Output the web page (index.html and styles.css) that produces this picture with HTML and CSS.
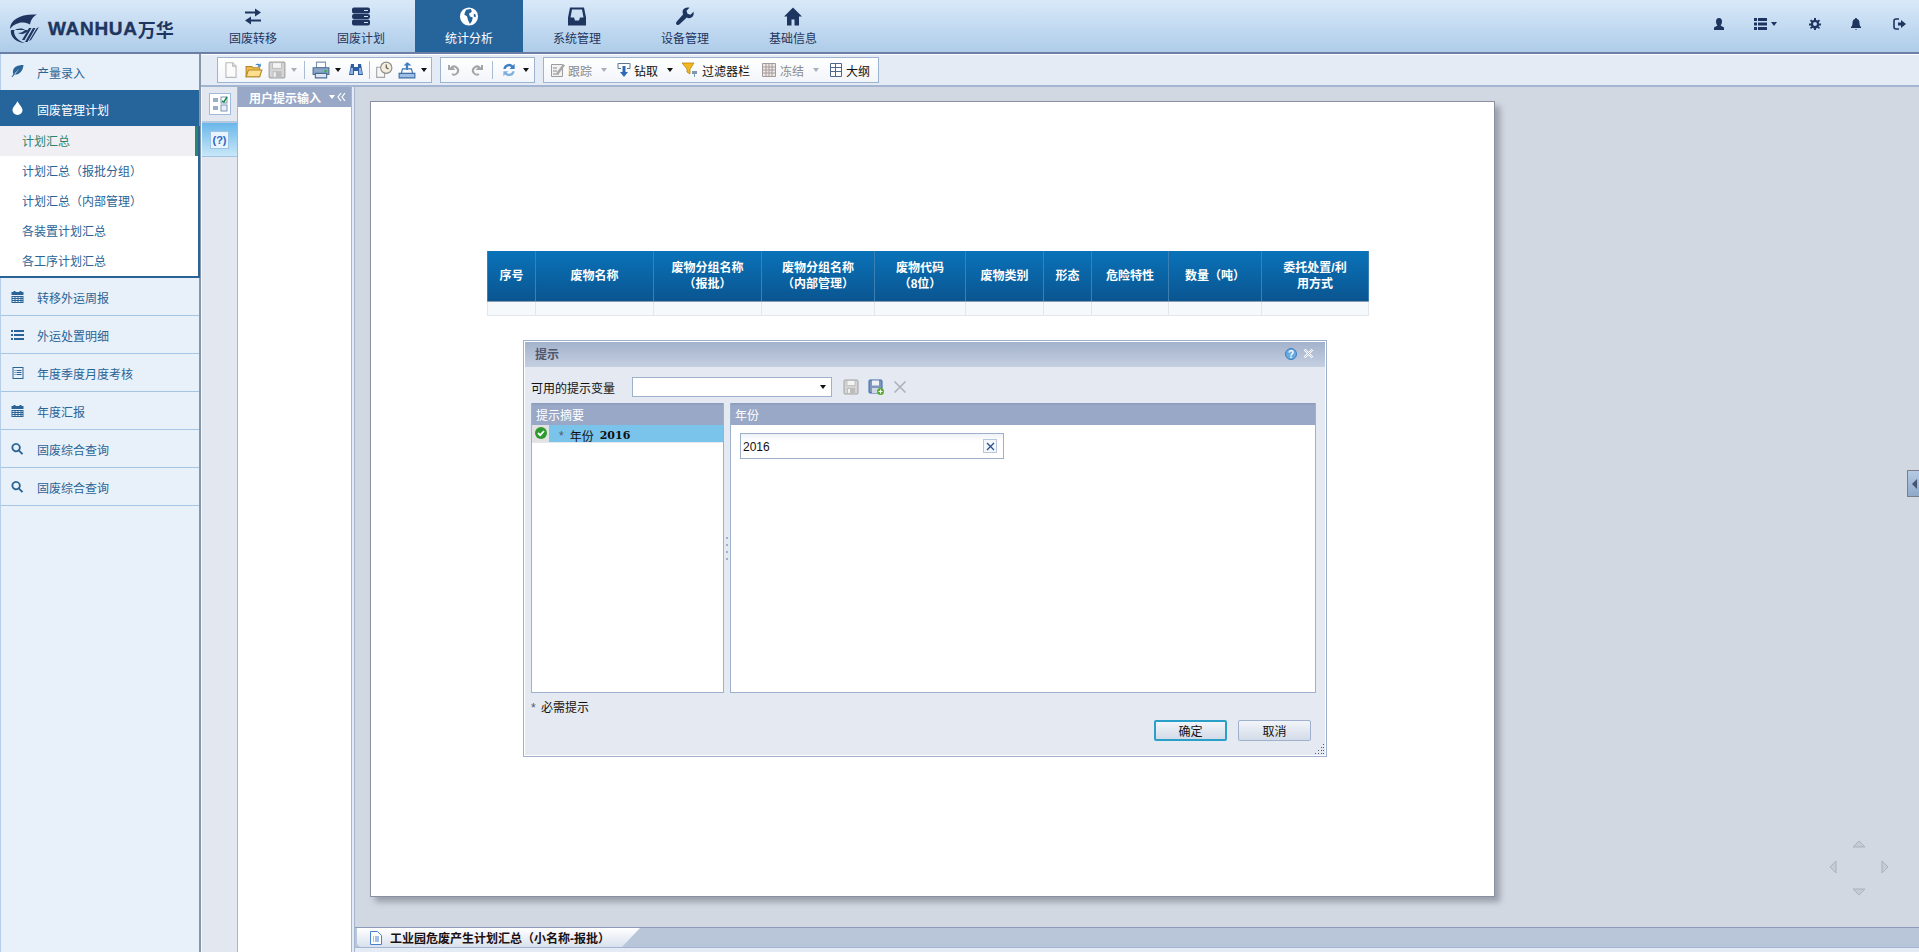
FILE: index.html
```html
<!DOCTYPE html>
<html>
<head>
  <meta charset="UTF-8">
  <title>固废管理计划</title>
  <link rel="stylesheet" href="styles.css">
</head>
<body>
  <svg class="defs" width="0" height="0">
    <symbol id="cal" viewBox="0 0 12 12"><path d="M2 0h2v1h4V0h2v1h2v3H0V1h2zM0 5h12v7H0zm1 1v1h2V6zm3 0v1h2V6zm3 0v1h2V6zm3 0v1h1V6zM1 8v1h2V8zm3 0v1h2V8zm3 0v1h2V8zm3 0v1h1V8zM1 10v1h2v-1zm3 0v1h2v-1zm3 0v1h2v-1zm3 0v1h1v-1z" fill-rule="evenodd"/></symbol>
    <symbol id="find" viewBox="0 0 13 13"><path d="M5 0a5 5 0 0 1 4.100 7.800l3.600 3.500-1.500 1.500-3.500-3.600A5 5 0 1 1 5 0zm0 2a3 3 0 1 0 0 6 3 3 0 0 0 0-6z" fill-rule="evenodd"/></symbol>
    <symbol id="disk" viewBox="0 0 16 16"><rect x="1" y="1" width="14" height="14" rx="1" fill="#d4d4d4" stroke="#a3a3a3"/><rect x="4" y="1.500" width="8" height="5" fill="#f4f4f4" stroke="#b5b5b5" stroke-width=".7"/><rect x="4" y="9" width="8" height="6" fill="#bdbdbd"/><rect x="5" y="10" width="2" height="4" fill="#f0f0f0"/></symbol>
  </svg>

  <header class="topbar">
    <div class="logo">
      <svg width="29" height="29" viewBox="0 0 29 29"><path d="M0 15C0 6 10-.5 27 .5c-4 2-6 5-7 10-4-2-8-2.500-11-1.500C5 10 2 12 0 15z" fill="#1e3560"/><path d="M1 16c-1.500 7 6 13 14 13-6-2-11-6-11-12 3-3 8-3 11-1-2 2-4 3-7 3 3 2 8 1 10-3z" fill="#1e3560"/><path d="M15 28l8-14h2.500l-8 14zM19 27l7.500-12.500L29 13l-8 13zM12 26l7-12h2.500l-7 12z" fill="#1e3560"/></svg>
      <span class="logo-en">WANHUA</span><span class="logo-cn">万华</span>
    </div>
    <nav class="mainnav">
      <a class="navitem">
        <svg width="18" height="16" viewBox="0 0 18 16"><path d="M1 3h10V0l6 4-6 4V5H1zM17 11H7V8l-6 4 6 4v-3h10z"/></svg>
        <span>固废转移</span>
      </a>
      <a class="navitem">
        <svg width="18" height="18" viewBox="0 0 18 18"><path d="M2 0h14a2 2 0 0 1 2 2v2a2 2 0 0 1-2 2H2a2 2 0 0 1-2-2V2a2 2 0 0 1 2-2zm0 6.500h14a2 2 0 0 1 2 2v1a2 2 0 0 1-2 2H2a2 2 0 0 1-2-2v-1a2 2 0 0 1 2-2zM2 12h14a2 2 0 0 1 2 2v2a2 2 0 0 1-2 2H2a2 2 0 0 1-2-2v-2a2 2 0 0 1 2-2z"/><path d="M12 2.500h4v1h-4zM12 8.500h4v1h-4zM12 14.500h4v1h-4z" fill="#cfe1f3"/></svg>
        <span>固废计划</span>
      </a>
      <a class="navitem active">
        <svg width="20" height="20" viewBox="0 0 20 20"><circle cx="10" cy="10" r="9.500" fill="#fff"/><path d="M7 3l5-1 1 3-3 2 1 3 3 1-1 4-2 3-2-4-1-4-3-2 1-3zM15 7l2 1v3l-2-1z" fill="#26659c"/></svg>
        <span>统计分析</span>
      </a>
      <a class="navitem">
        <svg width="18" height="18" viewBox="0 0 18 18"><path d="M2 0h14l2 10v8H0v-8zM4 2l-1.500 8H6l1 3h4l1-3h3.500L14 2z" fill-rule="evenodd"/></svg>
        <span>系统管理</span>
      </a>
      <a class="navitem">
        <svg width="18" height="18" viewBox="0 0 18 18"><path d="M17.500 4.200l-3 3-3-1-1-3 3-3C11-.6 8 .3 7 2.500c-.7 1.500-.5 3 .2 4.200L.8 14c-1 1.200-1 2.200-.2 3s2 .7 3-.3l7.200-6.600c1.300.7 2.800.8 4.200.1 2.200-1 3.200-3.600 2.500-6z"/></svg>
        <span>设备管理</span>
      </a>
      <a class="navitem">
        <svg width="18" height="18" viewBox="0 0 18 18"><path d="M9 0l9 9h-3v9h-4.500v-6h-3v6H3V9H0z"/></svg>
        <span>基础信息</span>
      </a>
    </nav>
    <div class="usertools">
      <svg class="tool-user" width="12" height="12" viewBox="0 0 12 12"><path d="M6 0c2 0 3 1.500 3 3.500S8 7 7.500 7.500L11 9.500V12H1V9.500l3.500-2C4 7 3 5.500 3 3.500S4 0 6 0z"/></svg>
      <span class="tool-list">
        <svg width="13" height="12" viewBox="0 0 13 12"><path d="M0 0h3v3H0zM4 0h9v3H4zM0 4.500h3v3H0zM4 4.500h9v3H4zM0 9h3v3H0zM4 9h9v3H4z"/></svg>
        <i class="caret"></i>
      </span>
      <svg class="tool-cog" width="12" height="12" viewBox="0 0 12 12"><path d="M5 0h2v2l1.500.6L10 1.500 11 3 9.700 4.200 10 5.500h2v2h-2l-.4 1L11 9.500 10 11 8.500 9.800 7 10.400V12H5v-1.600L3.500 9.800 2 11 1 9.500l1.400-1-.4-1H0v-2h2l.3-1.300L1 3l1-1.500 1.500 1.100L5 2zm1 4a2 2 0 1 0 0 4 2 2 0 0 0 0-4z" fill-rule="evenodd"/></svg>
      <svg class="tool-bell" width="12" height="12" viewBox="0 0 12 12"><path d="M6 0c.7 0 1 .4 1 1 1.800.5 2.500 2 2.500 4 0 2 .5 3 1.500 4v1H1V9c1-1 1.500-2 1.500-4 0-2 .7-3.500 2.500-4 0-.6.3-1 1-1zM5 11h2l-1 1z"/></svg>
      <svg width="13" height="12" viewBox="0 0 13 12"><path d="M6 1H3a2 2 0 0 0-2 2v6a2 2 0 0 0 2 2h3" fill="none" stroke="#1e3560" stroke-width="1.600"/><path d="M5 4.500h3V2l5 4-5 4V7.500H5z"/></svg>
    </div>
  </header>

  <div class="app">
    <aside class="sidebar">
      <a class="side-item first">
        <svg width="12" height="12" viewBox="0 0 12 12"><path d="M12 0C6 0 2 2 1.500 6c-.2 1.500 0 2.500.4 3L0 12l1 0 2-2.500c4 .5 8-2 9-9.500zM3 8.500L8 3.500 3.700 9z" fill-rule="evenodd"/></svg>
        <span>产量录入</span>
      </a>
      <a class="side-item open">
        <svg width="12" height="14" viewBox="0 0 12 14"><path d="M6 0c1 3 5 6 5 9a5 5 0 0 1-10 0c0-3 4-6 5-9z" fill="#fff"/></svg>
        <span>固废管理计划</span>
      </a>
      <div class="submenu">
        <a class="sub-item current">计划汇总</a>
        <a class="sub-item">计划汇总（报批分组）</a>
        <a class="sub-item">计划汇总（内部管理）</a>
        <a class="sub-item">各装置计划汇总</a>
        <a class="sub-item">各工序计划汇总</a>
      </div>
      <a class="side-item"><svg width="12" height="12"><use href="#cal"/></svg><span>转移外运周报</span></a>
      <a class="side-item">
        <svg width="13" height="12" viewBox="0 0 13 12"><path d="M0 1h2v2H0zM3 1h10v2H3zM0 5h2v2H0zM3 5h10v2H3zM0 9h2v2H0zM3 9h10v2H3z"/></svg>
        <span>外运处置明细</span>
      </a>
      <a class="side-item">
        <svg width="12" height="12" viewBox="0 0 12 12"><path d="M1 0h11v12H1zm1 1v10h9V1zm1 2h1v1H3zm2 0h5v1H5zM3 5h1v1H3zm2 0h5v1H5zM3 7h1v1H3zm2 0h5v1H5z" fill-rule="evenodd"/></svg>
        <span>年度季度月度考核</span>
      </a>
      <a class="side-item"><svg width="12" height="12"><use href="#cal"/></svg><span>年度汇报</span></a>
      <a class="side-item"><svg width="12" height="12"><use href="#find"/></svg><span>固废综合查询</span></a>
      <a class="side-item"><svg width="12" height="12"><use href="#find"/></svg><span>固废综合查询</span></a>
    </aside>

    <main class="workspace">
      <div class="toolbar">
        <div class="tb-group first">
          <span class="btn"><svg width="18" height="18" viewBox="0 0 16 16"><path d="M3.500 1.500h6l3 3v10h-9z" fill="#fbfbfb" stroke="#b9b9b9"/><path d="M9.500 1.500v3h3" fill="#e8e8e8" stroke="#b9b9b9"/></svg></span>
          <span class="btn"><svg width="18" height="18" viewBox="0 0 16 16"><path d="M1 5h5l1 1h6v8H1z" fill="#f3c04f" stroke="#b78a25"/><path d="M1 14l2-6h12l-2 6z" fill="#fbdf8e" stroke="#b78a25"/><path d="M9 4c1-2 3-2 4-1l1-1v3h-3l1-1c-1-.5-2-.5-3 0z" fill="#3f7fc4"/></svg></span>
          <span class="btn"><svg width="18" height="18"><use href="#disk"/></svg></span>
          <span class="caret-btn"><i class="caret pale"></i></span>
          <i class="sep"></i>
          <span class="btn"><svg width="18" height="18" viewBox="0 0 16 16"><path d="M4 1h8v5H4z" fill="#fff" stroke="#7d93ad"/><path d="M1 6h14v6H1z" fill="#8aa7c9" stroke="#4c6d93"/><path d="M3 11h10v4H3z" fill="#dbe6f2" stroke="#4c6d93"/><rect x="11" y="8" width="2" height="2" fill="#38b24a"/></svg></span>
          <span class="caret-btn"><i class="caret dark"></i></span>
          <span class="btn"><svg width="16" height="16" viewBox="0 0 16 16"><path d="M3 2h3v3h4V2h3l2 11h-5V9H6v4H1z" fill="#2f5f9f"/><path d="M3 6h2v6H2zM11 6h2l1 6h-3z" fill="#8db5df"/></svg></span>
          <i class="sep tight"></i>
          <span class="btn"><svg width="18" height="18" viewBox="0 0 16 16"><path d="M1.500 5.500h7v9h-7z" fill="#f7f7f7" stroke="#a5a5a5"/><circle cx="10" cy="6" r="5" fill="#f3eddc" stroke="#8c8c8c"/><path d="M10 3v3l2 1" fill="none" stroke="#555"/></svg></span>
          <span class="btn"><svg width="18" height="18" viewBox="0 0 16 16"><path d="M1 11h14v4H1z" fill="#9dbfe4" stroke="#3f6ea8"/><path d="M3 11l1-4h3M13 11l-1-4H9" fill="none" stroke="#3f6ea8"/><path d="M7 8V4H5l3-3 1 .5 3 2.500H9v4z" fill="#3f7fc4"/></svg></span>
          <span class="caret-btn"><i class="caret dark"></i></span>
        </div>
        <div class="tb-group">
          <span class="btn"><svg width="16" height="16" viewBox="0 0 16 16"><path d="M3 3v4h4L5.500 5.500A4 4 0 1 1 6 12" fill="none" stroke="#a5a5a5" stroke-width="2"/></svg></span>
          <span class="btn"><svg width="16" height="16" viewBox="0 0 16 16"><path d="M13 3v4H9l1.500-1.500A4 4 0 1 0 10 12" fill="none" stroke="#a5a5a5" stroke-width="2"/></svg></span>
          <i class="sep"></i>
          <span class="btn"><svg width="18" height="18" viewBox="0 0 16 16"><path d="M3 7a5 5 0 0 1 8.500-3L13 2.500V7H8.500l1.500-1.500A3 3 0 0 0 5 7z" fill="#3f7fc4"/><path d="M13 9a5 5 0 0 1-8.500 3L3 13.500V9h4.500L6 10.500A3 3 0 0 0 11 9z" fill="#7fb0e0"/></svg></span>
          <span class="caret-btn"><i class="caret dark"></i></span>
        </div>
        <div class="tb-group text-group">
          <span class="tb-item off"><svg width="16" height="16" viewBox="0 0 16 16"><path d="M1.500 2.500h11v12h-11z" fill="#f2f2f2" stroke="#9c9c9c"/><path d="M3 6h4M3 9h4M3 12h6" stroke="#8a8a8a"/><path d="M7 10l6-8 2 1.500-6 8-3 1z" fill="#a8a8a8"/></svg>跟踪</span>
          <span class="caret-btn"><i class="caret pale"></i></span>
          <span class="tb-item"><svg width="16" height="16" viewBox="0 0 16 16"><path d="M2 1.500h12M2 1.500v5h3M14 1.500v5h-3" fill="none" stroke="#5a7896"/><path d="M6.500 4h3v6H12l-4 5-4-5h2.500z" fill="#2f6bb5"/></svg>钻取</span>
          <span class="caret-btn"><i class="caret dark"></i></span>
          <span class="tb-item wide"><svg width="16" height="16" viewBox="0 0 16 16"><path d="M0 1h12L8 7v5l-3-2V7z" fill="#f2b821" stroke="#b98613" stroke-width=".8"/><path d="M10 9h5v3h-2v3h-1v-3h-2z" fill="#7d97b6"/></svg>过滤器栏</span>
          <span class="tb-item off gap3"><svg width="16" height="16" viewBox="0 0 16 16"><path d="M1.500 1.500h13v13h-13z" fill="#efe9e6" stroke="#a59a9a"/><path d="M1.500 5h13M1.500 8h13M1.500 11h13M5 1.500v13M8 1.500v13M11 1.500v13" stroke="#a59a9a" fill="none"/></svg>冻结</span>
          <span class="caret-btn"><i class="caret pale"></i></span>
          <span class="tb-item"><svg width="16" height="16" viewBox="0 0 16 16"><path d="M2.500 1.500h11v13h-11z" fill="#fff" stroke="#4d6a8c"/><path d="M7.500 1.500v13M2.500 5.500h5M2.500 9.500h5M7.500 5.500h6M7.500 9.500h6" stroke="#4d6a8c" fill="none"/></svg>大纲</span>
        </div>
      </div>

      <div class="content">
        <div class="tabstrip">
          <span class="tile">
            <svg width="18" height="18" viewBox="0 0 18 18"><path d="M2 4h5M2 6h5M2 12h5M2 14h5" stroke="#2f5f8f" fill="none"/><rect x="10" y="2" width="6" height="6" fill="#fff" stroke="#7f96b3"/><path d="M11 6l2 1 3-5" fill="none" stroke="#1c8a4c" stroke-width="1.500"/><rect x="10" y="10" width="6" height="6" fill="#e8eef6" stroke="#7f96b3"/></svg>
          </span>
          <span class="tab-rule"></span>
          <span class="tabbtn"><span class="help">(?)</span></span>
        </div>
        <section class="panel">
          <div class="panel-head">
            <span>用户提示输入</span>
            <span class="panel-ctl"><i class="caret white"></i><svg width="9" height="8" viewBox="0 0 9 8"><path d="M4 0L1 4l3 4M8 0L5 4l3 4" fill="none" stroke="#fff" stroke-width="1.200"/></svg></span>
          </div>
        </section>
        <div class="gutter"></div>
        <div class="viewer">
          <div class="canvas">
            <div class="sheet">
              <table class="report">
                <colgroup>
                  <col class="w48"><col class="w118"><col class="w108"><col class="w113"><col class="w91">
                  <col class="w78"><col class="w48"><col class="w77"><col class="w93"><col class="w107">
                </colgroup>
                <thead>
                  <tr>
                    <th>序号</th><th>废物名称</th><th>废物分组名称<br>（报批）</th><th>废物分组名称<br>（内部管理）</th><th>废物代码<br>（8位）</th>
                    <th>废物类别</th><th>形态</th><th>危险特性</th><th>数量（吨）</th><th>委托处置/利<br>用方式</th>
                  </tr>
                </thead>
                <tbody>
                  <tr><td></td><td></td><td></td><td></td><td></td><td></td><td></td><td></td><td></td><td></td></tr>
                </tbody>
              </table>

              <div class="dialog">
                <div class="dlg-title">
                  <span>提示</span>
                  <span class="dlg-ctl">
                    <svg width="12" height="12" viewBox="0 0 12 12"><circle cx="6" cy="6" r="5.500" fill="#6aa8e0" stroke="#3f7fc0"/><text x="6" y="9.500" class="qmark">?</text></svg>
                    <svg width="11" height="11" viewBox="0 0 11 11"><path d="M1.500 1.500l8 8M9.500 1.500l-8 8" stroke="#fff" stroke-width="2.400"/><path d="M1.500 1.500l8 8M9.500 1.500l-8 8" stroke="#8f9bb0" stroke-width=".6"/></svg>
                  </span>
                </div>
                <div class="dlg-vars">
                  <span class="vars-label">可用的提示变量</span>
                  <span class="combo"><i class="caret dark"></i></span>
                  <svg width="16" height="16"><use href="#disk"/></svg>
                  <svg width="16" height="16" viewBox="0 0 16 16"><rect x="1" y="1" width="13" height="13" rx="1" fill="#7f97bd" stroke="#3d66a8"/><rect x="4" y="1.500" width="7" height="5" fill="#eef2f7"/><rect x="4" y="9" width="7" height="5" fill="#cfd7e2"/><circle cx="12.500" cy="12.500" r="3.500" fill="#57ad2e"/><path d="M12.500 10.500v4M10.500 12.500h4" stroke="#fff"/></svg>
                  <svg width="14" height="14" viewBox="0 0 14 14"><path d="M1.500 1.500l11 11M12.500 1.500l-11 11" stroke="#a9b0ba" stroke-width="1.500"/></svg>
                </div>
                <div class="dlg-panes">
                  <div class="pane pane-left">
                    <div class="pane-head">提示摘要</div>
                    <div class="summary-row">
                      <span class="check"><svg width="12" height="12" viewBox="0 0 12 12"><circle cx="6" cy="6" r="6" fill="#2c9a2c"/><path d="M3 6l2.200 2.200L9 4" fill="none" stroke="#fff" stroke-width="1.800"/></svg></span>
                      <span class="summary-text"><span class="star">*</span> 年份 <b>2016</b></span>
                    </div>
                  </div>
                  <div class="splitter"><i></i><i></i><i></i><i></i></div>
                  <div class="pane pane-right">
                    <div class="pane-head">年份</div>
                    <div class="pane-body">
                      <div class="yearbox">
                        <span>2016</span>
                        <span class="clear"><svg width="9" height="9" viewBox="0 0 9 9"><path d="M1 1l7 7M8 1L1 8" stroke="#274f8f" stroke-width="1.300"/></svg></span>
                      </div>
                    </div>
                  </div>
                </div>
                <div class="dlg-note"><span class="star">*</span> 必需提示</div>
                <div class="dlg-btns">
                  <button class="dlg-btn primary">确定</button>
                  <button class="dlg-btn">取消</button>
                </div>
                <svg class="grip" width="12" height="12" viewBox="0 0 12 12"><path d="M10 1h1v1h-1zM8 4h1v1H8zM10 4h1v1h-1zM5 7h1v1H5zM8 7h1v1H8zM10 7h1v1h-1zM2 10h1v1H2zM5 10h1v1H5zM8 10h1v1H8zM10 10h1v1h-1z" fill="#4f5f78"/></svg>
              </div>
            </div>

            <span class="side-handle"><i></i></span>
            <div class="pan-arrows">
              <svg width="60" height="60" viewBox="0 0 60 60"><g fill="#c6ccd6" stroke="#aab1bc"><path d="M24 10l6-6 6 6zM24 52l6 6 6-6zM7 24l-6 6 6 6zM53 24l6 6-6 6z"/></g></svg>
            </div>
          </div>
          <div class="tabbar">
            <div class="doc-tab">
              <svg width="12" height="14" viewBox="0 0 12 14"><path d="M.5.500h7l4 4v9H.5z" fill="#fff" stroke="#4b7fd0"/><path d="M3 6h1M5 6h4M3 8h1M5 8h4M3 10h1M5 10h4" stroke="#4b7fd0"/></svg>
              <span>工业园危废产生计划汇总（小名称-报批）</span>
            </div>
          </div>
          <div class="statusbar"></div>
        </div>
      </div>
    </main>
  </div>
</body>
</html>
```

FILE: styles.css
```css
* {
  box-sizing: border-box;
}

html, body {
  height: 100%;
}

body {
  margin: 0;
  display: flex;
  flex-direction: column;
  overflow: hidden;
  font-family: "Liberation Sans", "Noto Sans CJK SC", sans-serif;
  font-size: 12px;
  color: #111;
  background: #e4ebf5;
}

.defs {
  position: absolute;
}

.caret {
  display: inline-block;
  width: 0;
  height: 0;
  border-left: 3px solid transparent;
  border-right: 3px solid transparent;
  border-top: 4px solid #1e3560;
}

.caret.dark {
  border-top-color: #111;
}

.caret.pale {
  border-top-color: #a8b0bc;
}

.caret.white {
  border-top-color: #fff;
}

/* top bar */
.topbar {
  flex: none;
  height: 54px;
  display: flex;
  background: linear-gradient(#d9e9f9, #aecce9);
  border-bottom: 2px solid #6b7ea6;
}

.logo {
  width: 199px;
  display: flex;
  align-items: center;
  padding: 2px 0 0 10px;
  color: #1e3560;
  font-weight: bold;
}

.logo svg {
  flex: none;
  margin: 2px 9px 0 0;
}

.logo-en {
  font-size: 19px;
  letter-spacing: 0.7px;
  padding-top: 4px;
  -webkit-text-stroke: 0.4px #1e3560;
}

.logo-cn {
  font-size: 18px;
  padding-top: 4px;
}

.mainnav {
  display: flex;
}

.navitem {
  width: 108px;
  height: 52px;
  display: flex;
  flex-direction: column;
  align-items: center;
  padding-top: 7px;
  color: #1e3560;
  fill: #1e3560;
}

.navitem svg {
  height: 19px;
}

.navitem span {
  margin-top: 4px;
  line-height: 18px;
}

.navitem.active {
  background: #26659c;
  color: #fff;
}

.usertools {
  margin-left: auto;
  display: flex;
  align-items: center;
  padding: 0 13px 4px 0;
  fill: #1e3560;
}

.tool-user {
  margin-right: 29px;
}

.tool-list {
  display: flex;
  align-items: center;
  gap: 4px;
  margin-right: 32px;
}

.tool-cog {
  margin-right: 29px;
}

.tool-bell {
  margin-right: 31px;
}

/* layout */
.app {
  flex: 1;
  min-height: 0;
  display: flex;
}

/* left menu */
.sidebar {
  width: 201px;
  flex: none;
  background: #e8f1fa;
  border-right: 2px solid #8696ad;
  border-left: 1px solid #b5cde6;
  color: #2a6496;
}

.side-item {
  height: 38px;
  display: flex;
  align-items: center;
  padding: 2px 0 0 10px;
  border-bottom: 1px solid #a5c5e3;
  fill: #2a6496;
}

.side-item svg {
  flex: none;
  width: 13px;
  margin: -2px 13px 0 0;
}

.side-item.first {
  height: 36px;
  border-bottom: 0;
  padding-top: 0;
}

.side-item.open {
  height: 36px;
  margin-left: -1px;
  padding-left: 11px;
  background: #26659c;
  color: #fff;
  border-bottom: 0;
}

.submenu {
  margin: 0 -1px 0 -1px;
  background: #fff;
  border-bottom: 2px solid #2a6496;
  border-right: 2px solid #2a6496;
  height: 152px;
}

.sub-item {
  display: block;
  height: 30px;
  line-height: 32px;
  padding-left: 22px;
}

.sub-item.current {
  background: #f0eff4;
  color: #2a8570;
  border-right: 3px solid #2a8570;
}

/* toolbar */
.workspace {
  flex: 1;
  min-width: 0;
  display: flex;
  flex-direction: column;
}

.toolbar {
  flex: none;
  height: 33px;
  display: flex;
  gap: 8px;
  padding: 2px 0 0 16px;
  background: #e4ebf5;
  border-top: 1px solid #fff;
  border-bottom: 2px solid #a3b5d1;
}

.tb-group {
  height: 26px;
  display: flex;
  align-items: center;
  padding: 0 2px 0 1px;
  background: linear-gradient(#fff, #f2f5fa);
  border: 1px solid #9db4d0;
}

.tb-group.first {
  padding-right: 1px;
}

.btn {
  width: 23px;
  display: flex;
  justify-content: center;
}

.caret-btn {
  width: 12px;
  display: flex;
  justify-content: center;
}

.sep {
  width: 1px;
  height: 18px;
  margin: 0 4px;
  background: #a9bcd4;
}

.sep.tight {
  margin: 0 2px;
}

.text-group {
  gap: 6px;
  padding: 0 8px 0 6px;
}

.tb-item {
  display: flex;
  align-items: center;
  gap: 2px;
  color: #111;
}

.tb-item.off {
  color: #8b8b8b;
}

.tb-item.wide {
  gap: 4px;
  margin-right: 5px;
}

.tb-item.gap3 {
  gap: 3px;
}

/* content row */
.content {
  flex: 1;
  min-height: 0;
  display: flex;
}

.tabstrip {
  width: 36px;
  flex: none;
  display: flex;
  flex-direction: column;
  align-items: center;
  padding-top: 6px;
  background: #e3e8f0;
  border-left: 1px solid #f2f5f9;
}

.tile {
  width: 22px;
  height: 22px;
  display: flex;
  align-items: center;
  justify-content: center;
  background: #fff;
  border: 1px solid #9db9dc;
}

.tab-rule {
  width: 100%;
  height: 2px;
  margin-top: 6px;
  background: #b5c9de;
}

.tabbtn {
  width: 100%;
  height: 34px;
  display: flex;
  align-items: center;
  justify-content: center;
  background: linear-gradient(#69b7ea, #c9e8f8);
  border-bottom: 1px solid #9fc4e0;
}

.help {
  width: 19px;
  height: 18px;
  display: flex;
  align-items: center;
  justify-content: center;
  background: #e9f4fc;
  border: 1px solid #9cc3e8;
  color: #2c66c8;
  font-weight: bold;
  font-size: 11px;
}

.panel {
  width: 115px;
  flex: none;
  background: #fff;
  border-left: 1px solid #a8b6cc;
  border-right: 1px solid #a8b6cc;
}

.panel-head {
  height: 20px;
  display: flex;
  align-items: center;
  justify-content: space-between;
  padding: 0 5px 0 11px;
  background: #98a8c6;
  color: #fff;
  font-weight: bold;
}

.panel-ctl {
  display: flex;
  align-items: center;
  gap: 2px;
}

.gutter {
  width: 3px;
  flex: none;
  background: #e4ebf5;
  border-right: 1px solid #a3b5d1;
}

/* report area */
.viewer {
  flex: 1;
  min-width: 0;
  display: flex;
  flex-direction: column;
  background: #d1d8e1;
}

.canvas {
  flex: 1;
  min-height: 0;
  position: relative;
  padding: 14px 0 0 15px;
}

.sheet {
  position: relative;
  width: 1125px;
  height: 796px;
  padding: 149px 0 0 116px;
  background: #fff;
  border: 1px solid #8a8fa1;
  box-shadow: 5px 5px 6px #9aa0ab;
}

.report {
  width: 881px;
  table-layout: fixed;
  border-collapse: collapse;
}

.w48 { width: 48px; }
.w77 { width: 77px; }
.w78 { width: 78px; }
.w91 { width: 91px; }
.w93 { width: 93px; }
.w107 { width: 107px; }
.w108 { width: 108px; }
.w113 { width: 113px; }
.w118 { width: 118px; }

.report th {
  height: 50px;
  padding: 0;
  line-height: 16px;
  font-size: 12px;
  font-weight: bold;
  color: #fff;
  background: linear-gradient(#0a72b8, #0a5590);
  border-left: 1px solid #3b7fb3;
  border-right: 1px solid #3b7fb3;
  border-bottom: 1px solid #8b9bb0;
}

.report td {
  height: 14px;
  padding: 0;
  background: #f6f9fb;
  border: 1px solid #e3e6ea;
}

/* prompt dialog */
.dialog {
  position: absolute;
  left: 152px;
  top: 238px;
  width: 804px;
  height: 417px;
  padding: 1px;
  background: #e4e9f2;
  border: 1px solid #9fb0cd;
  box-shadow: inset 0 0 0 1px #fff;
}

.dlg-title {
  height: 25px;
  display: flex;
  align-items: center;
  justify-content: space-between;
  padding: 0 11px 2px 10px;
  background: linear-gradient(#a3b2cc, #c4cfe1);
  color: #4f586b;
  font-weight: bold;
}

.dlg-ctl {
  display: flex;
  align-items: center;
  gap: 6px;
}

.qmark {
  font-size: 10px;
  font-weight: bold;
  fill: #fff;
  text-anchor: middle;
}

.dlg-vars {
  height: 36px;
  display: flex;
  align-items: center;
  padding: 4px 0 0 6px;
}

.vars-label {
  width: 101px;
}

.combo {
  width: 200px;
  height: 20px;
  display: flex;
  align-items: center;
  justify-content: flex-end;
  padding-right: 5px;
  margin-right: 11px;
  background: #fff;
  border: 1px solid #9fb0cd;
}

.dlg-vars svg {
  margin-right: 9px;
}

.dlg-panes {
  height: 290px;
  display: flex;
  padding: 0 9px 0 6px;
}

.pane {
  display: flex;
  flex-direction: column;
  background: #fff;
  border: 1px solid #9fb0cd;
  border-top: 0;
}

.pane-left {
  width: 193px;
}

.pane-right {
  flex: 1;
}

.pane-head {
  height: 22px;
  display: flex;
  align-items: center;
  padding: 0 0 0 4px;
  background: linear-gradient(#8a9cbb 0, #98a8c6 3px);
  color: #fff;
}

.summary-row {
  height: 18px;
  display: flex;
  align-items: center;
  border-bottom: 1px solid #e4e8ee;
}

.check {
  width: 17px;
  height: 100%;
  display: flex;
  align-items: center;
  justify-content: center;
  padding-bottom: 2px;
  background: #e2e2e2;
}

.summary-text {
  flex: 1;
  height: 100%;
  display: flex;
  align-items: center;
  gap: 4px;
  padding: 4px 0 0 10px;
  background: #7ac3ea;
}

.summary-text b {
  margin-left: 2px;
  font-family: "DejaVu Serif", serif;
  font-size: 11px;
}

.star {
  color: #4a5870;
  margin-right: 2px;
}

.splitter {
  width: 6px;
  display: flex;
  flex-direction: column;
  justify-content: center;
  align-items: center;
  gap: 5px;
}

.splitter i {
  width: 2px;
  height: 2px;
  background: #9fb0cd;
}

.pane-body {
  padding: 8px 0 0 9px;
}

.yearbox {
  width: 264px;
  height: 26px;
  display: flex;
  align-items: center;
  justify-content: space-between;
  padding: 2px 6px 0 2px;
  background: linear-gradient(#eef2f7, #fff 30%);
  border: 1px solid #9fb0cd;
}

.clear {
  width: 14px;
  height: 14px;
  margin-top: -2px;
  display: flex;
  align-items: center;
  justify-content: center;
  background: #f4f7fb;
  border: 1px solid #b7c6dc;
}

.dlg-note {
  height: 22px;
  padding: 8px 0 0 6px;
  line-height: 14px;
}

.dlg-btns {
  display: flex;
  justify-content: flex-end;
  gap: 11px;
  margin-top: 5px;
  padding-right: 14px;
}

.dlg-btn {
  width: 73px;
  height: 21px;
  padding: 0;
  font: inherit;
  color: #111;
  background: linear-gradient(#f2f5f9, #d3dbe8);
  border: 1px solid #9fb0cd;
  border-radius: 2px;
}

.dlg-btn.primary {
  border: 2px solid #2aa0c8;
}

.grip {
  position: absolute;
  right: 1px;
  bottom: 1px;
}

/* overlays on the canvas */
.side-handle {
  position: absolute;
  right: 0;
  top: 383px;
  width: 12px;
  height: 27px;
  display: flex;
  align-items: center;
  padding-left: 4px;
  background: linear-gradient(#b4cae4, #8fa9c9);
  border: 1px solid #7a7f88;
  border-right: 0;
}

.side-handle i {
  width: 0;
  height: 0;
  border-top: 5px solid transparent;
  border-bottom: 5px solid transparent;
  border-right: 5px solid #46556f;
}

.pan-arrows {
  position: absolute;
  left: 1474px;
  top: 750px;
}

/* bottom tabs */
.tabbar {
  flex: none;
  height: 20px;
  padding-left: 2px;
  background: #b9c5d9;
  border-top: 1px solid #8b9bb9;
}

.doc-tab {
  width: 283px;
  height: 19px;
  display: flex;
  align-items: center;
  gap: 8px;
  padding-left: 13px;
  background: linear-gradient(#fff, #d9e1ee);
  font-weight: bold;
  color: #1c1010;
  clip-path: polygon(0 0, 100% 0, calc(100% - 18px) 100%, 3px 100%, 0 calc(100% - 3px));
}

.statusbar {
  flex: none;
  height: 5px;
  background: #e4ebf5;
  border-top: 1px solid #a3b5d1;
}
```
